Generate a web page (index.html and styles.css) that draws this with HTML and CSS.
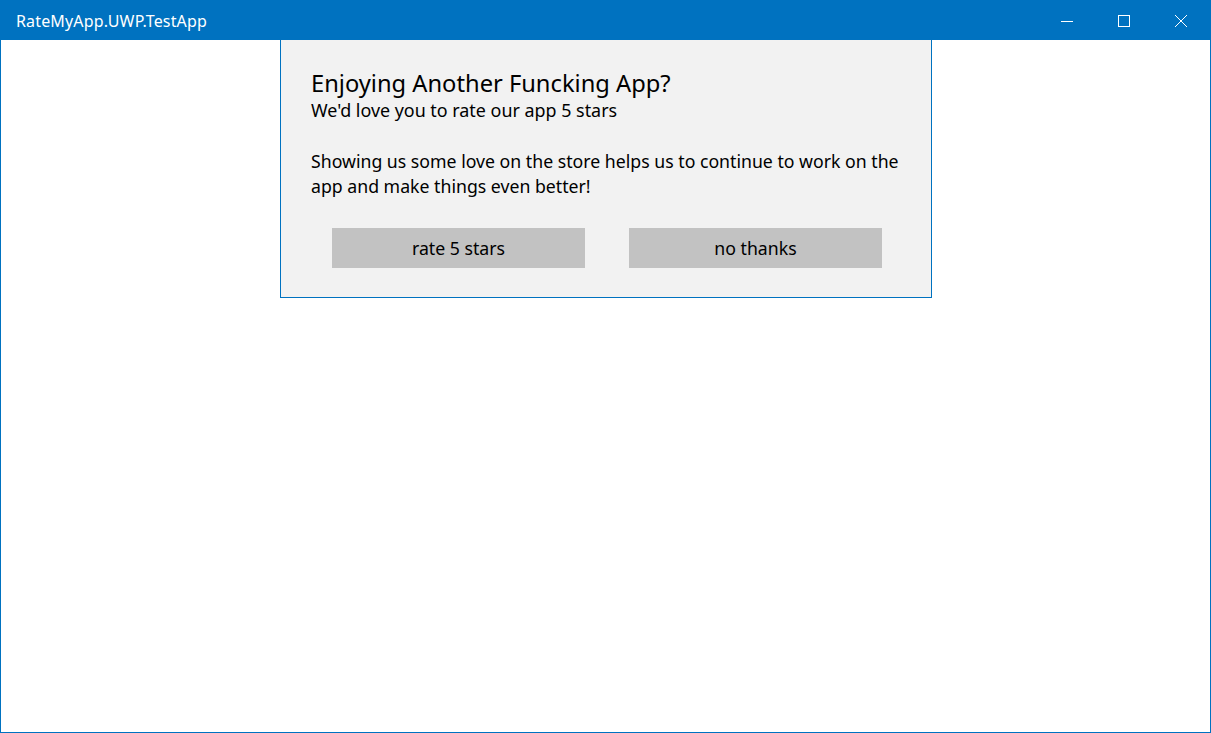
FILE: index.html
```html
<!DOCTYPE html>
<html>
<head>
<meta charset="utf-8">
<link rel="stylesheet" href="styles.css">
</head>
<body>
<div class="window">
  <div class="titlebar">
    <div class="title">RateMyApp.UWP.TestApp</div>
    <div class="controls">
      <div class="ctl">
        <svg width="12" height="12" viewBox="0 0 12 12"><path d="M0 6.5 H12" stroke="#fff" stroke-width="1" fill="none"/></svg>
      </div>
      <div class="ctl">
        <svg width="12" height="12" viewBox="0 0 12 12"><rect x="0.5" y="0.5" width="11" height="11" stroke="#fff" stroke-width="1" fill="none"/></svg>
      </div>
      <div class="ctl">
        <svg width="12" height="12" viewBox="0 0 12 12"><path d="M0 0 L12 12 M12 0 L0 12" stroke="#fff" stroke-width="1" fill="none"/></svg>
      </div>
    </div>
  </div>
  <div class="content">
    <div class="dialog">
      <div class="heading">Enjoying Another Funcking App?</div>
      <div class="sub">We'd love you to rate our app 5 stars</div>
      <div class="body">Showing us some love on the store helps us to continue to work on the app and make things even better!</div>
      <div class="buttons">
        <div class="btn">rate 5 stars</div>
        <div class="btn">no thanks</div>
      </div>
    </div>
  </div>
</div>
</body>
</html>
```
FILE: styles.css
```css
html, body {
  margin: 0;
  padding: 0;
  width: 1211px;
  height: 733px;
  overflow: hidden;
  background: #fff;
}
.window {
  box-sizing: border-box;
  width: 1211px;
  height: 733px;
  border: 1px solid #0072c0;
  display: flex;
  flex-direction: column;
  font-family: "Noto Sans", "Open Sans", sans-serif;
}
.titlebar {
  height: 39px;
  background: #0072c0;
  display: flex;
  align-items: center;
  justify-content: space-between;
  color: #fff;
}
.title {
  margin-left: 15px;
  font-size: 16px;
  letter-spacing: 0.15px;
  margin-top: 1px;
}
.controls {
  display: flex;
  height: 100%;
  margin-right: 1px;
}
.ctl {
  width: 57px;
  display: flex;
  align-items: center;
  justify-content: center;
  padding-top: 1px;
}
.content {
  flex: 1;
  display: flex;
  padding-left: 279px;
}
.dialog {
  box-sizing: border-box;
  width: 652px;
  height: 258px;
  background: #f2f2f2;
  border: 1px solid #0072c0;
  border-top: none;
  padding: 27px 10px 0 30px;
  color: #000;
}
.heading {
  font-size: 23.7px;
  line-height: 32px;
}
.sub {
  font-size: 17.9px;
  line-height: 25px;
  margin-top: -1px;
}
.body {
  font-size: 17.7px;
  line-height: 25px;
  margin-top: 26px;
}
.buttons {
  display: flex;
  gap: 44px;
  margin-left: 21px;
  margin-top: 29px;
}
.btn {
  width: 253px;
  height: 40px;
  background: #c2c2c2;
  display: flex;
  align-items: center;
  justify-content: center;
  font-size: 17.7px;
}
```
